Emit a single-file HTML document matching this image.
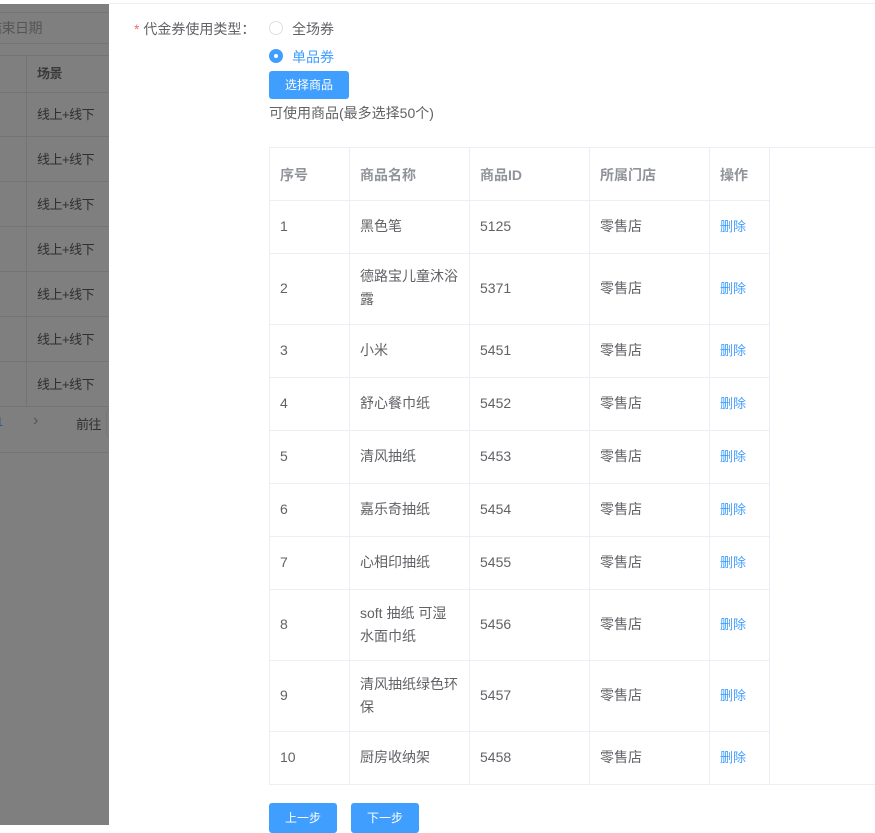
<!DOCTYPE html>
<html><head><meta charset="utf-8"><style>
*{margin:0;padding:0;box-sizing:border-box}
body{width:875px;height:825px;overflow:hidden;background:#fff;position:relative;font-family:"Liberation Sans","Noto Sans CJK SC",sans-serif;font-size:14px;color:#5a5e66}
.a{position:absolute}
.ov{left:0;top:4px;width:109px;height:821px;background:#7f7f7f;overflow:hidden}
.ov .h{position:absolute;left:0;width:109px;height:1px;background:#747474}
.ov .t{position:absolute;color:#2f2f2f;font-size:13px;white-space:nowrap;letter-spacing:-0.5px}
.hl{height:1px;background:#ebeef5}
.vl{width:1px;background:#ebeef5}
.c{position:absolute;font-size:14px;color:#606266;line-height:23px;white-space:nowrap}
.hd{font-weight:bold;color:#909399}
.del{color:#409eff;font-size:13px}
.btn{position:absolute;background:#409eff;color:#fff;border-radius:3px;font-size:12px;text-align:center}
</style></head><body>
<div class="a" style="left:109px;top:3px;width:766px;height:1px;background:#ebeef5"></div>
<div class="a ov">
 <div class="h" style="top:8px"></div>
 <div class="t" style="left:-12px;top:14px;color:#555;font-size:14px">结束日期</div>
 <div class="h" style="top:39px"></div>
 <div class="h" style="top:51px"></div>
 <div class="a" style="left:26px;top:51px;width:1px;height:352px;background:#747474"></div>
 <div class="t" style="left:37px;top:59px;font-weight:bold;color:#3a3a3a">场景</div>
 <div class="h" style="top:88px"></div>
 <div class="t" style="left:37px;top:100px">线上+线下</div><div class="h" style="top:132px"></div>
 <div class="t" style="left:37px;top:145px">线上+线下</div><div class="h" style="top:177px"></div>
 <div class="t" style="left:37px;top:190px">线上+线下</div><div class="h" style="top:222px"></div>
 <div class="t" style="left:37px;top:235px">线上+线下</div><div class="h" style="top:267px"></div>
 <div class="t" style="left:37px;top:280px">线上+线下</div><div class="h" style="top:312px"></div>
 <div class="t" style="left:37px;top:325px">线上+线下</div><div class="h" style="top:357px"></div>
 <div class="t" style="left:37px;top:370px">线上+线下</div><div class="h" style="top:402px"></div>
 <div class="t" style="left:-4px;top:410px;color:#2a5a8a">1</div>
 <div class="t" style="left:33px;top:408px;color:#555;font-size:16px">›</div>
 <div class="t" style="left:76px;top:410px">前往</div>
 <div class="a" style="left:106px;top:405px;width:6px;height:28px;border:1px solid #777;border-radius:3px"></div>
 <div class="h" style="top:448px"></div>
</div>
<div class="a" style="left:134px;top:19px;font-size:14px;color:#606266"><span style="color:#f56c6c">*</span> 代金券使用类型：</div>
<div class="a" style="left:269px;top:21px;width:14px;height:14px;border:1px solid #dcdfe6;border-radius:50%"></div>
<div class="a" style="left:292px;top:19px;color:#606266">全场券</div>
<div class="a" style="left:269px;top:49px;width:14px;height:14px;background:#409eff;border-radius:50%"><div class="a" style="left:5px;top:5px;width:4px;height:4px;background:#fff;border-radius:50%"></div></div>
<div class="a" style="left:292px;top:47px;color:#409eff">单品券</div>
<div class="btn" style="left:269px;top:71px;width:80px;height:28px;line-height:28px">选择商品</div>
<div class="a" style="left:269px;top:103px;color:#606266">可使用商品(最多选择50个)</div>

<div class="a hl" style="left:269px;top:147px;width:606px"></div>
<div class="a hl" style="left:269px;top:784px;width:606px"></div>
<div class="a vl" style="left:269px;top:147px;height:638px"></div>
<div class="a vl" style="left:349px;top:147px;height:638px"></div>
<div class="a vl" style="left:469px;top:147px;height:638px"></div>
<div class="a vl" style="left:589px;top:147px;height:638px"></div>
<div class="a vl" style="left:709px;top:147px;height:638px"></div>
<div class="a vl" style="left:769px;top:147px;height:638px"></div>
<div class="c hd" style="left:280px;top:164px">序号</div>
<div class="c hd" style="left:360px;top:164px">商品名称</div>
<div class="c hd" style="left:480px;top:164px">商品ID</div>
<div class="c hd" style="left:600px;top:164px">所属门店</div>
<div class="c hd" style="left:720px;top:164px">操作</div>
<div class="a hl" style="left:269px;top:200px;width:500px"></div>
<div class="a hl" style="left:269px;top:253px;width:500px"></div>
<div class="a hl" style="left:269px;top:324px;width:500px"></div>
<div class="a hl" style="left:269px;top:377px;width:500px"></div>
<div class="a hl" style="left:269px;top:430px;width:500px"></div>
<div class="a hl" style="left:269px;top:483px;width:500px"></div>
<div class="a hl" style="left:269px;top:536px;width:500px"></div>
<div class="a hl" style="left:269px;top:589px;width:500px"></div>
<div class="a hl" style="left:269px;top:660px;width:500px"></div>
<div class="a hl" style="left:269px;top:731px;width:500px"></div>

<div class="c" style="left:280px;top:215px">1</div><div class="c" style="left:360px;top:215px">黑色笔</div><div class="c" style="left:480px;top:215px">5125</div><div class="c" style="left:600px;top:215px">零售店</div><div class="c del" style="left:720px;top:215px">删除</div>
<div class="c" style="left:280px;top:277px">2</div><div class="c" style="left:360px;top:265px">德路宝儿童沐浴<br>露</div><div class="c" style="left:480px;top:277px">5371</div><div class="c" style="left:600px;top:277px">零售店</div><div class="c del" style="left:720px;top:277px">删除</div>
<div class="c" style="left:280px;top:339px">3</div><div class="c" style="left:360px;top:339px">小米</div><div class="c" style="left:480px;top:339px">5451</div><div class="c" style="left:600px;top:339px">零售店</div><div class="c del" style="left:720px;top:339px">删除</div>
<div class="c" style="left:280px;top:392px">4</div><div class="c" style="left:360px;top:392px">舒心餐巾纸</div><div class="c" style="left:480px;top:392px">5452</div><div class="c" style="left:600px;top:392px">零售店</div><div class="c del" style="left:720px;top:392px">删除</div>
<div class="c" style="left:280px;top:445px">5</div><div class="c" style="left:360px;top:445px">清风抽纸</div><div class="c" style="left:480px;top:445px">5453</div><div class="c" style="left:600px;top:445px">零售店</div><div class="c del" style="left:720px;top:445px">删除</div>
<div class="c" style="left:280px;top:498px">6</div><div class="c" style="left:360px;top:498px">嘉乐奇抽纸</div><div class="c" style="left:480px;top:498px">5454</div><div class="c" style="left:600px;top:498px">零售店</div><div class="c del" style="left:720px;top:498px">删除</div>
<div class="c" style="left:280px;top:551px">7</div><div class="c" style="left:360px;top:551px">心相印抽纸</div><div class="c" style="left:480px;top:551px">5455</div><div class="c" style="left:600px;top:551px">零售店</div><div class="c del" style="left:720px;top:551px">删除</div>
<div class="c" style="left:280px;top:613px">8</div><div class="c" style="left:360px;top:602px">soft 抽纸 可湿<br>水面巾纸</div><div class="c" style="left:480px;top:613px">5456</div><div class="c" style="left:600px;top:613px">零售店</div><div class="c del" style="left:720px;top:613px">删除</div>
<div class="c" style="left:280px;top:684px">9</div><div class="c" style="left:360px;top:673px">清风抽纸绿色环<br>保</div><div class="c" style="left:480px;top:684px">5457</div><div class="c" style="left:600px;top:684px">零售店</div><div class="c del" style="left:720px;top:684px">删除</div>
<div class="c" style="left:280px;top:746px">10</div><div class="c" style="left:360px;top:746px">厨房收纳架</div><div class="c" style="left:480px;top:746px">5458</div><div class="c" style="left:600px;top:746px">零售店</div><div class="c del" style="left:720px;top:746px">删除</div>

<div class="btn" style="left:269px;top:803px;width:68px;height:30px;line-height:30px">上一步</div>
<div class="btn" style="left:351px;top:803px;width:68px;height:30px;line-height:30px">下一步</div>
</body></html>
